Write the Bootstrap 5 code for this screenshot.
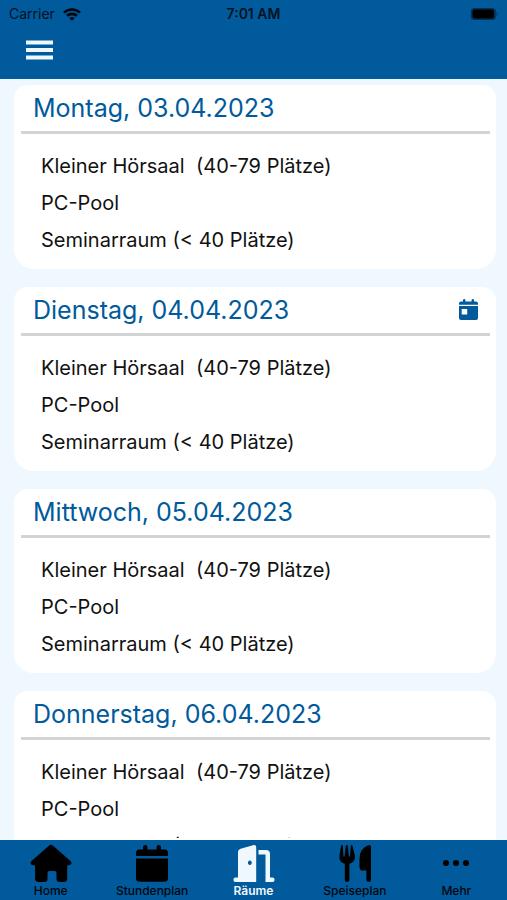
<!DOCTYPE html>
<html lang="de">
<head>
<meta charset="utf-8">
<meta name="viewport" content="width=device-width, initial-scale=1">
<title>Räume</title>
<link href="https://cdn.jsdelivr.net/npm/bootstrap@5.3.0/dist/css/bootstrap.min.css" rel="stylesheet">
<style>
  :root { --brand: #005a9c; --pale: #f0f8ff; }
  body { font-family: Inter, "Liberation Sans", sans-serif; background: var(--pale); color: #111; }
  .app-bar, .tab-bar { background: var(--brand); }
  .status-line { height: 28px; font-size: 14px; line-height: 28px; color: #001223; padding: 0 9px; }
  .status-line .clock { font-weight: 600; }
  .menu-row { height: 51px; padding: 0 26px; }
  .menu-row button { line-height: 0; margin-top: -7px; }
  .day-list { min-height: 0; overflow-y: auto; scrollbar-width: none; padding: 6px 11px 18px 14px; gap: 18px; }
  .day-list::-webkit-scrollbar { display: none; }
  .list-edge { height: 2px; margin: 0 11px 0 14px; background: #fff; }
  .day { background: #fff; border-radius: 14px 14px 20px 20px; padding: 0 6px 10px 7px; }
  .day-head { height: 49px; border-bottom: 3px solid #d3d3d3; padding: 0 12px; }
  .day-head h2 { font-size: 25px; line-height: 46px; font-weight: 400; color: var(--brand); }
  .rooms { padding: 14px 20px 0; }
  .rooms li { font-size: 20px; line-height: 37px; white-space: pre-wrap; }
  .tab-bar a { height: 60px; color: #00060c; font-size: 12px; line-height: 14px; font-weight: 500; padding-top: 4px; }
  .tab-bar a.active { color: var(--pale); font-weight: 600; }
  .tab-bar svg { height: 40px; }
  svg { display: block; flex: none; }
</style>
<script src="https://cdn.jsdelivr.net/npm/bootstrap@5.3.0/dist/js/bootstrap.bundle.min.js"></script>
</head>
<body class="vh-100 d-flex flex-column overflow-hidden">
<header class="app-bar flex-shrink-0">
  <div class="status-line row g-0 align-items-center">
    <div class="col d-flex align-items-center gap-2">Carrier
      <svg width="18" height="13" viewBox="0 0 18 13" fill="none" stroke="#00060c" stroke-width="2.6"><path d="M1 4.6C5.4.4 12.6.4 17 4.6M4 7.8c2.8-2.6 7.2-2.6 10 0"/><path d="M9 12.8 6.2 10c1.6-1.4 4-1.4 5.6 0z" fill="#00060c" stroke="none"/></svg>
    </div>
    <div class="col-auto clock">7:01 AM</div>
    <div class="col d-flex justify-content-end">
      <svg width="28" height="14" viewBox="0 0 28 14"><rect x=".8" y="1" width="25" height="12" rx="3.5" fill="#00335c"/><rect x="2.5" y="2.5" width="21.500" height="9" rx="2" fill="#000"/><path d="M26.600 5v4q1.300-.5 1.300-2t-1.300-2" fill="#00335c"/></svg>
    </div>
  </div>
  <div class="menu-row d-flex align-items-center">
    <button type="button" class="btn p-0 border-0" aria-label="Menü">
      <svg width="27" height="20" viewBox="0 0 27 20" fill="#f0f8ff"><path d="M0 0.500h27v4H0zM0 8h27v4H0zM0 15.500h27v4H0z"/></svg>
    </button>
  </div>
</header>

<main class="day-list flex-grow-1 d-flex flex-column">
  <section class="day flex-shrink-0">
    <div class="day-head d-flex align-items-center justify-content-between"><h2 class="mb-0">Montag, 03.04.2023</h2></div>
    <ul class="rooms list-unstyled mb-0"><li>Kleiner Hörsaal  (40-79 Plätze)</li><li>PC-Pool</li><li>Seminarraum (&lt; 40 Plätze)</li></ul>
  </section>
  <section class="day flex-shrink-0">
    <div class="day-head d-flex align-items-center justify-content-between"><h2 class="mb-0">Dienstag, 04.04.2023</h2>
      <svg width="19" height="22" viewBox="0 0 19 22" fill="#005a9c" role="img" aria-label="Heute"><path d="M0 5.800V4.500q0-2 2-2h2V1Q4 0 5.200 0t1.200 1v1.500h6.200V1q0-1 1.200-1t1.200 1v1.500h2q2 0 2 2v1.300z"/><path fill-rule="evenodd" d="M0 7h19v12q0 2-2 2H2q-2 0-2-2zM2.700 10v5.500h5.500V10z"/></svg>
    </div>
    <ul class="rooms list-unstyled mb-0"><li>Kleiner Hörsaal  (40-79 Plätze)</li><li>PC-Pool</li><li>Seminarraum (&lt; 40 Plätze)</li></ul>
  </section>
  <section class="day flex-shrink-0">
    <div class="day-head d-flex align-items-center justify-content-between"><h2 class="mb-0">Mittwoch, 05.04.2023</h2></div>
    <ul class="rooms list-unstyled mb-0"><li>Kleiner Hörsaal  (40-79 Plätze)</li><li>PC-Pool</li><li>Seminarraum (&lt; 40 Plätze)</li></ul>
  </section>
  <section class="day flex-shrink-0">
    <div class="day-head d-flex align-items-center justify-content-between"><h2 class="mb-0">Donnerstag, 06.04.2023</h2></div>
    <ul class="rooms list-unstyled mb-0"><li>Kleiner Hörsaal  (40-79 Plätze)</li><li>PC-Pool</li><li>Seminarraum (&lt; 40 Plätze)</li></ul>
  </section>
</main>
<div class="list-edge flex-shrink-0"></div>

<nav class="tab-bar row g-0 flex-shrink-0 text-center" aria-label="Hauptnavigation">
  <a href="#home" class="col d-flex flex-column align-items-center text-decoration-none">
    <svg width="42" viewBox="0 0 42 40" fill="#000"><path d="M19.200 1.600q1.800-1.600 3.600 0L40.500 17q1.500 1.500.8 2.800-.6 1.400-2.400 1.400h-1.700v13.300q0 3.500-3.500 3.500h-4.200q-3 0-3-3v-6q0-2-2-2h-5q-2 0-2 2v6q0 3-3 3H8.600q-3.500 0-3.500-3.500V21.200H3q-1.800 0-2.400-1.400-.6-1.400.9-2.800z"/></svg>Home</a>
  <a href="#stundenplan" class="col d-flex flex-column align-items-center text-decoration-none">
    <svg width="34" viewBox="0 0 34 40" fill="#000"><path d="M1 12V9q0-3.600 3.600-3.600H8V3q0-2 2.200-2t2.200 2v2.400h9.200V3q0-2 2.200-2T26 3v2.400h3.400Q33 5.400 33 9v3zM1 14.500h32v19.700q0 3.600-3.600 3.600H4.600Q1 37.800 1 34.200z"/></svg>Stundenplan</a>
  <a href="#raeume" class="col d-flex flex-column align-items-center text-decoration-none active" aria-current="page">
    <svg width="42" viewBox="0 0 42 40" fill="#f0f8ff"><path fill-rule="evenodd" d="M5 33.500V8q0-2.600 2.600-3.300L20 1.200q3.200-.8 3.200 2V38H2.600Q.4 38 .4 35.800t2.200-2.300zM16.800 16.500a1.900 2.300 0 1 0 .1 0z"/><path d="M25.500 6H33q4 0 4 4v23.500h2.400q2.200 0 2.200 2.300T39.400 38H32.500V10.500h-7z"/></svg>Räume</a>
  <a href="#speiseplan" class="col d-flex flex-column align-items-center text-decoration-none">
    <svg width="34" viewBox="0 0 34 40" fill="#000"><path d="M3 2.200Q3.200 1 4 1t.9 1.200L5.400 12q.1.700.6.700t.6-.7L7.700 2.300Q7.800 1 8.800 1t1.100 1.300L10.900 12q.1.700.6.700t.6-.7l.6-9.800Q12.800 1 13.600 1t1 1.200l2.200 9.300q.8 3.600-1.600 6-1.700 1.700-3.800 2.200v16q0 2.200-2.300 2.200t-2.300-2.200v-16q-2.400-.4-4-2.200-2-2.400-1.300-6zM33 3v32.700q0 2.200-2.300 2.200t-2.300-2.200V26.500h-3.300q-3.600 0-3.600-3.600V15Q21.500 4 31 1q2-.3 2 2z"/></svg>Speiseplan</a>
  <a href="#mehr" class="col d-flex flex-column align-items-center text-decoration-none">
    <svg width="28" viewBox="0 0 28 40" fill="#000"><circle cx="4" cy="19" r="3"/><circle cx="14" cy="19" r="3"/><circle cx="24" cy="19" r="3"/></svg>Mehr</a>
</nav>
</body>
</html>
